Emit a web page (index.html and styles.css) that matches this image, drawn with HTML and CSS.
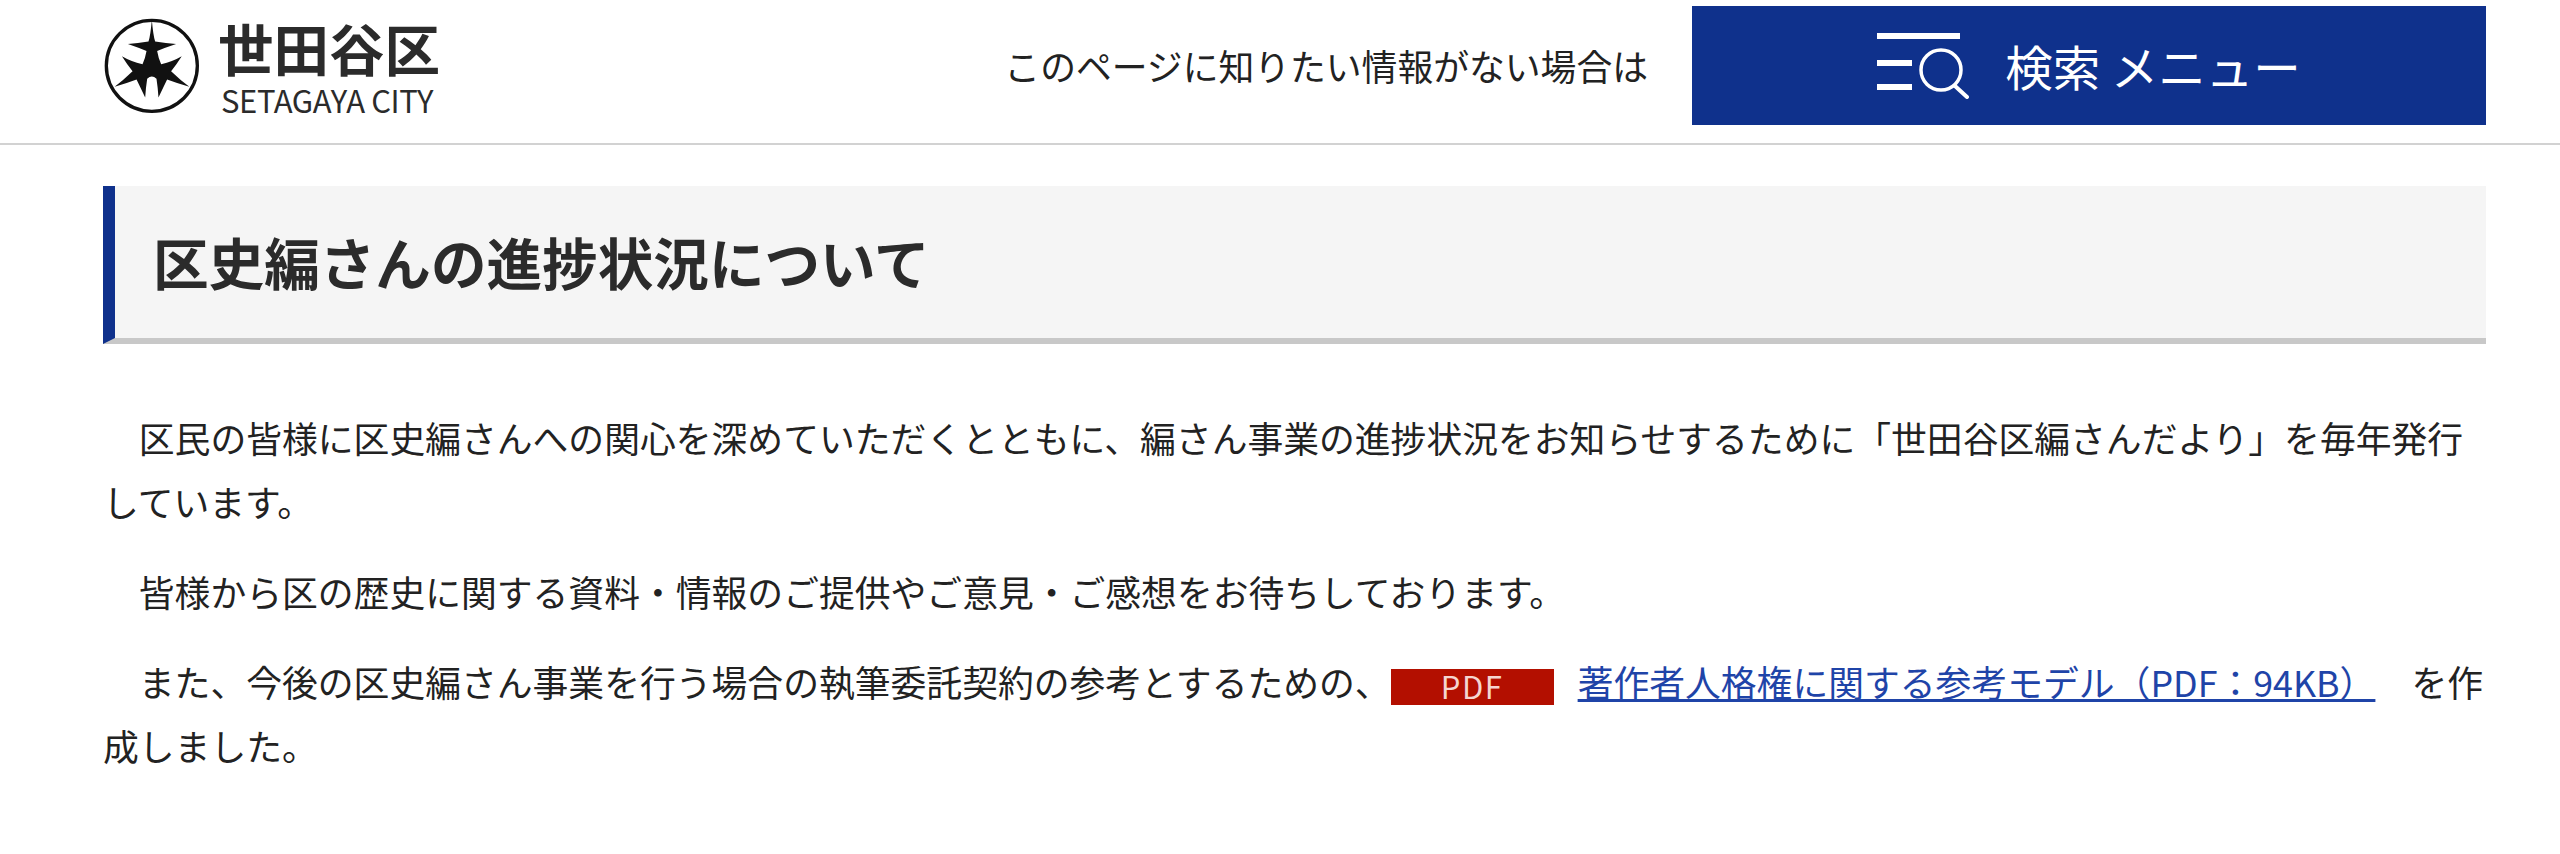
FILE: index.html
```html
<!DOCTYPE html>
<html lang="ja">
<head>
    <meta charset="UTF-8">
    <meta name="viewport" content="width=device-width, initial-scale=1.0">
    <title>区史編さんの進捗状況について</title>
    <link rel="stylesheet" href="styles.css">
</head>
<body>
    <header class="site-header">
        <a class="logo" href="#">
            <svg class="logo-mark" viewBox="65 50 295 295" aria-hidden="true">
                <circle cx="212" cy="197" r="137" fill="none" stroke="#111" stroke-width="10"/>
                <path fill="#111" d="M212 58 Q216 105 222 124 Q255 130 285 131 Q252 142 228 152 Q232 175 240 192 Q275 184 302 168 Q285 195 270 213 Q298 240 325 260 Q290 250 258 238 Q245 265 232 292 Q230 262 226 236 Q212 222 198 236 Q194 262 192 292 Q179 265 166 238 Q134 250 100 260 Q126 240 154 213 Q139 195 122 168 Q149 184 184 192 Q192 175 196 152 Q172 142 140 131 Q169 130 202 124 Q208 105 212 58 Z"/>
            </svg>
            <div class="logo-text">
                <div class="logo-ja">世田谷区</div>
                <div class="logo-en">SETAGAYA CITY</div>
            </div>
        </a>
        <p class="header-note">このページに知りたい情報がない場合は</p>
        <button class="search-btn">
            <svg class="search-icon" viewBox="0 0 92 66" aria-hidden="true">
                <path fill="#fff" d="M0 0H83V6H0ZM0 27H35V33H0ZM0 51H35V57H0Z"/>
                <circle cx="64" cy="37" r="20" fill="none" stroke="#fff" stroke-width="3.5"/>
                <path d="M78 53 L90 64" fill="none" stroke="#fff" stroke-width="4" stroke-linecap="round"/>
            </svg>
            <span>検索 メニュー</span>
        </button>
    </header>

    <main class="content">
        <h1 class="page-title">区史編さんの進捗状況について</h1>
        <p class="para">区民の皆様に区史編さんへの関心を深めていただくとともに、編さん事業の進捗状況をお知らせするために「世田谷区編さんだより」を毎年発行しています。</p>
        <p class="para">皆様から区の歴史に関する資料・情報のご提供やご意見・ご感想をお待ちしております。</p>
        <p class="para">また、今後の区史編さん事業を行う場合の執筆委託契約の参考とするための、<span class="pdf-badge">PDF</span><a class="file-link" href="#">著作者人格権に関する参考モデル（PDF：94KB）</a>を作成しました。</p>
    </main>
</body>
</html>
```

FILE: styles.css
```css
* {
    box-sizing: border-box;
    margin: 0;
    padding: 0;
}

body {
    font-family: "Noto Sans CJK JP", "Noto Sans", sans-serif;
    background: white;
    color: #222;
}

/* ヘッダー */
.site-header {
    display: flex;
    align-items: flex-start;
    height: 145px;
    padding: 6px 74px 0 103px;
    border-bottom: 2px solid #d2d2d2;
}

.logo {
    display: flex;
    align-items: flex-start;
    gap: 17px;
    margin-top: 11px;
    color: #2b2b2b;
    text-decoration: none;
}

.logo-mark {
    width: 98px;
    height: 98px;
}

.logo-text {
    margin-top: 2px;
}

.logo-ja {
    font-size: 55.5px;
    font-weight: 700;
    line-height: 56px;
}

.logo-en {
    margin-top: 7px;
    margin-left: 3px;
    font-size: 31px;
    line-height: 36px;
    white-space: nowrap;
    letter-spacing: -0.4px;
}

.header-note {
    margin-left: auto;
    margin-top: 33px;
    margin-right: 44px;
    font-size: 35.8px;
    line-height: 52px;
    white-space: nowrap;
}

.search-btn {
    display: flex;
    align-items: center;
    justify-content: center;
    gap: 36px;
    width: 794px;
    height: 119px;
    border: none;
    background: #0f318c;
    color: white;
    font-family: inherit;
    font-size: 47.5px;
    line-height: 60px;
}

.search-icon {
    width: 92px;
    height: 66px;
}

/* 本文 */
.content {
    padding: 41px 74px 0 103px;
}

.page-title {
    height: 158px;
    padding-left: 38px;
    background: #f5f5f5;
    border-left: 12px solid #0f318c;
    border-bottom: 6px solid #c8c8c8;
    font-size: 55.6px;
    font-weight: 700;
    line-height: 150px;
    color: #2b2b2b;
    margin-bottom: 61px;
}

.para {
    font-size: 35.8px;
    line-height: 64px;
    text-indent: 1em;
    margin-bottom: 26px;
}

.pdf-badge {
    display: inline-block;
    width: 163px;
    height: 36px;
    margin: 0 24px 0 0;
    background: #b30f00;
    color: #f5d5d0;
    font-size: 31px;
    line-height: 34px;
    letter-spacing: 1.5px;
    text-align: center;
    text-indent: 0;
    vertical-align: -2px;
}

.file-link {
    margin-right: 36px;
    color: #1f44a8;
    text-decoration: underline;
    text-decoration-thickness: 3px;
}
```
